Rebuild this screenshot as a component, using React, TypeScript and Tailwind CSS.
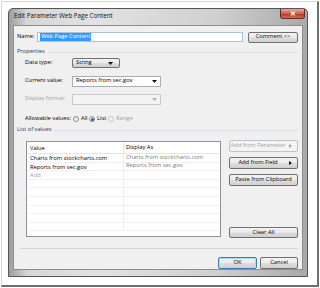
import React from "react";

const btnFace =
  "bg-[linear-gradient(#f2f2f2,#ebebeb_45%,#dddddd_55%,#cfcfcf)]";

function Btn({
  children,
  className = "",
  disabled = false,
  focused = false,
  arrow = false,
}: {
  children: React.ReactNode;
  className?: string;
  disabled?: boolean;
  focused?: boolean;
  arrow?: boolean;
}) {
  const border = focused
    ? "border-[#3c7fb1] shadow-[inset_0_0_0_1px_#a9dcf2]"
    : disabled
    ? "border-[#bfc3c6] text-[#a3a3a3]"
    : "border-[#707070] text-black";
  return (
    <div
      className={`relative flex items-center justify-center whitespace-nowrap rounded-[2px] border ${border} ${
        disabled ? "bg-[#f4f4f4]" : btnFace
      } ${arrow ? "pr-[11px]" : ""} ${className}`}
    >
      <span>{children}</span>
      {arrow && (
        <svg
          className="absolute right-[5px] top-1/2 -translate-y-1/2"
          width="3"
          height="4"
          viewBox="0 0 3 4"
        >
          <path d="M0 0 L3 2 L0 4 Z" fill={disabled ? "#a3a3a3" : "#111"} />
        </svg>
      )}
    </div>
  );
}

function DownArrow({ color = "#111" }: { color?: string }) {
  return (
    <svg width="5" height="3" viewBox="0 0 5 3">
      <path d="M0 0 L5 0 L2.5 3 Z" fill={color} />
    </svg>
  );
}

function Radio({ checked = false, disabled = false }: { checked?: boolean; disabled?: boolean }) {
  return (
    <div
      className={`flex h-[6px] w-[6px] shrink-0 items-center justify-center rounded-full border ${
        disabled ? "border-[#c4c4c4] bg-[#f4f4f4]" : "border-[#8e8f8f] bg-[linear-gradient(#e4e4e4,#fbfbfb)]"
      }`}
    >
      {checked && <div className="h-[3px] w-[3px] rounded-full bg-[#1d5fa8]" />}
    </div>
  );
}

function GroupHeader({ label }: { label: string }) {
  return (
    <div className="flex h-[8px] items-center gap-[3px]">
      <span className="whitespace-nowrap text-[#1e395b]">{label}</span>
      <div className="h-px flex-1 bg-[#d5dfe5]" />
    </div>
  );
}

const rows = [
  { v: "Charts from stockcharts.com", d: "Charts from stockcharts.com" },
  { v: "Reports from sec.gov", d: "Reports from sec.gov" },
  { v: "Add", d: "", add: true },
  { v: "", d: "" },
  { v: "", d: "" },
  { v: "", d: "" },
  { v: "", d: "" },
  { v: "", d: "" },
  { v: "", d: "" },
];

export default function App() {
  return (
    <div className="h-[288px] w-[320px] overflow-hidden bg-white font-['Open_Sans',sans-serif] text-[5.8px] leading-none tracking-[-0.03px] text-black">
      <div className="ml-px mt-px h-[286px] w-[318px] border-l border-t border-b-2 border-r-2 border-l-[#d6d6d6] border-t-[#d6d6d6] border-b-[#6e6e6e] border-r-[#6e6e6e] pl-[6px] pt-[6px]">
        {/* window */}
        <div className="flex h-[269px] w-[300px] flex-col rounded-t-[5px] border border-[#555] bg-[linear-gradient(to_right,#9c9c9c,#d6d6d6_6%,#e2e2e2_30%,#cfcfcf_70%,#a9a9a9)] px-[4px] pb-[6px]">
          {/* title bar */}
          <div className="flex h-[16px] items-start">
            <span className="mt-[4px] whitespace-nowrap pl-px text-[6.3px] text-[#111]">Edit Parameter Web Page Content</span>
            <div className="ml-auto mr-[-2px] flex h-[10px] w-[25px] items-center justify-center rounded-b-[3px] border border-t-0 border-[#6b2a22] bg-[linear-gradient(#e9a99b,#d0614f_50%,#b8321c_55%,#d2705a)] text-[7px] font-bold text-white">
              ✕
            </div>
          </div>

          {/* client */}
          <div className="flex flex-1 flex-col border border-[#8d8d8d] bg-[#f0f0f0] pl-[3px] pr-[4px]">
            {/* name row */}
            <div className="mt-[5px] flex h-[12px] items-center">
              <span className="w-[20px] whitespace-nowrap">Name:</span>
              <div className="flex h-[10px] w-[206px] items-center border border-[#a9c3da] bg-white pl-[2px]">
                <span className="whitespace-nowrap bg-[#3399ff] px-px py-[1.5px] text-white">Web Page Content</span>
              </div>
              <Btn className="ml-auto h-[11px] w-[50px]">Comment &gt;&gt;</Btn>
            </div>

            <div className="mt-[5px]">
              <GroupHeader label="Properties" />
            </div>

            <div className="ml-[8px] mt-[1px] flex h-[12px] items-center">
              <span className="w-[47px] whitespace-nowrap">Data type:</span>
              <div className={`flex h-[10px] w-[48px] items-center justify-between rounded-[2px] border border-[#707070] ${btnFace} pl-[3px] pr-[6px]`}>
                <span>String</span>
                <DownArrow />
              </div>
            </div>

            <div className="ml-[8px] mt-[6px] flex h-[12px] items-center">
              <span className="w-[47px] whitespace-nowrap">Current value:</span>
              <div className="flex h-[11px] w-[89px] items-center justify-between border border-[#abadb3] bg-white pl-[3px] pr-[3px]">
                <span className="whitespace-nowrap">Reports from sec.gov</span>
                <DownArrow />
              </div>
            </div>

            <div className="ml-[8px] mt-[6px] flex h-[12px] items-center">
              <span className="w-[47px] whitespace-nowrap text-[#a0a0a0]">Display format:</span>
              <div className="flex h-[11px] w-[89px] items-center justify-end border border-[#c9c9c9] bg-[#f4f4f4] pr-[3px]">
                <DownArrow color="#b0b0b0" />
              </div>
            </div>

            <div className="ml-[8px] mt-[8px] flex h-[12px] items-center">
              <span className="w-[48px] whitespace-nowrap">Allowable values:</span>
              <Radio />
              <span className="ml-[2px] w-[8px]">All</span>
              <Radio checked />
              <span className="ml-[2px] w-[11px]">List</span>
              <Radio disabled />
              <span className="ml-[2px] text-[#a0a0a0]">Range</span>
            </div>

            <div className="mt-[1px]">
              <GroupHeader label="List of values" />
            </div>

            <div className="mt-[6px] flex h-[98px]">
              {/* table */}
              <div className="ml-[9px] mt-px flex h-[96px] w-[195px] flex-col overflow-hidden border border-[#8e9297] bg-white">
                <div className="flex h-[12px] shrink-0 items-center border-b border-[#e5e5e5]">
                  <span className="w-[97px] border-r border-[#e5e5e5] pl-[3px] leading-[12px]">Value</span>
                  <span className="pl-[2px]">Display As</span>
                </div>
                {rows.map((r, i) => (
                  <div key={i} className="flex h-[8.6px] shrink-0 items-center border-b border-[#f0f0f0]">
                    <span className={`h-full w-[97px] whitespace-nowrap border-r border-[#ececec] pl-[3px] leading-[8px] ${r.add ? "text-[#a0a0a0]" : ""}`}>
                      {r.v}
                    </span>
                    <span className="whitespace-nowrap pl-[2px] text-[#7a7a7a]">{r.d}</span>
                  </div>
                ))}
              </div>

              {/* right buttons */}
              <div className="ml-auto flex w-[69px] flex-col">
                <Btn disabled arrow className="h-[12px]">Add from Parameter</Btn>
                <Btn arrow className="mt-[5px] h-[12px]">Add from Field</Btn>
                <Btn className="mt-[5px] h-[12px]">Paste from Clipboard</Btn>
                <Btn className="mt-auto h-[11px]">Clear All</Btn>
              </div>
            </div>

            <div className="ml-[3px] mt-[10px] h-px bg-[#d5d5d5]" />

            <div className="mt-[8px] flex justify-end gap-[3px]">
              <Btn focused className="h-[12px] w-[39px]">OK</Btn>
              <Btn className="h-[12px] w-[38px]">Cancel</Btn>
            </div>
          </div>
        </div>
      </div>
    </div>
  );
}
